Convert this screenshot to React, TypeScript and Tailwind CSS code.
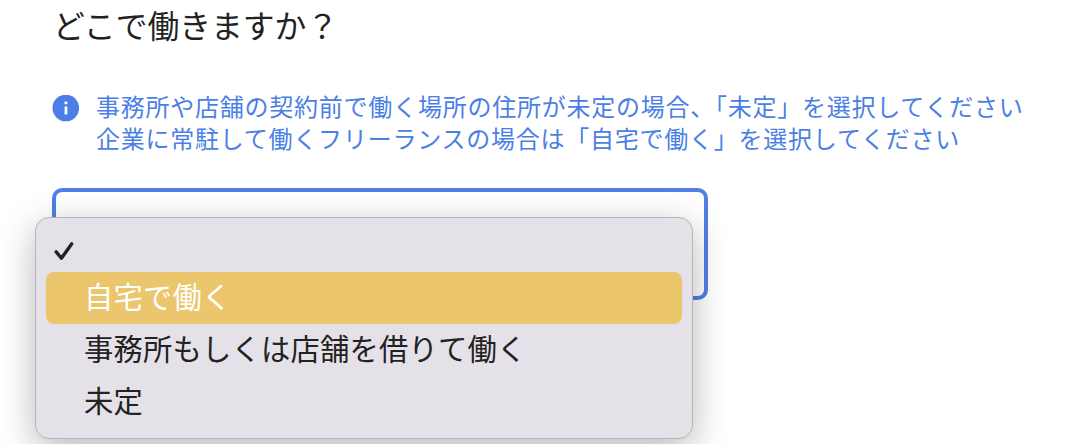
import * as React from 'react';

const options = ['自宅で働く', '事務所もしくは店舗を借りて働く', '未定'];

export default function App() {
    return (
        <main className="h-[444px] w-[1076px] overflow-hidden bg-white pl-[52px] font-['Liberation_Sans','Noto_Sans_CJK_JP',sans-serif]">
            <h1 className="pl-px pt-[7px] text-[31.8px] leading-[40px] text-[#222222]">どこで働きますか？</h1>
            <div className="mt-[45px] flex gap-[17px] text-[#4b7fe5]">
                <svg className="mt-[3px] size-[27px] shrink-0" viewBox="0 0 27 27">
                    <circle cx="13.8" cy="13" r="13.3" fill="#4b7fe5" />
                    <path d="M12.6 6.5h2.7v2.7h-2.7zM12.6 11.6h2.7v8h-2.7z" fill="white" />
                </svg>
                <p className="whitespace-nowrap text-[24px] leading-[32px] tracking-[0.76px]">
                    事務所や店舗の契約前で働く場所の住所が未定の場合、「未定」を選択してください
                    <br />
                    企業に常駐して働くフリーランスの場合は「自宅で働く」を選択してください
                </p>
            </div>
            <div className="relative mt-[32px] h-[112px] w-[656px] rounded-[10px] border-4 border-[#5080e6]">
                <ul className="absolute -left-[21px] top-[25px] h-[222px] w-[658px] rounded-[14px] border border-[#b5b5b8] bg-[#e5e1e9] px-[10px] pt-[11px] shadow-[0_10px_36px_rgba(0,0,0,0.28)]">
                    <li className="h-[43px] pl-[8px] pt-[12px]">
                        <svg className="h-[20px] w-[20px]" viewBox="0 0 20 20" fill="none" stroke="#222222" strokeWidth="3.4" strokeLinecap="round" strokeLinejoin="round">
                            <path d="M2.2 10.9 7.4 17.3 17.6 2.9" />
                        </svg>
                    </li>
                    {options.map((option, i) => (
                        <li
                            key={option}
                            className={`h-[52px] rounded-[8px] pl-[38px] text-[29.3px] leading-[52px] tracking-[0.2px] ${i === 0 ? 'bg-[#ebc66d] text-white' : 'text-[#222222]'}`}
                        >
                            {option}
                        </li>
                    ))}
                </ul>
            </div>
        </main>
    );
}
